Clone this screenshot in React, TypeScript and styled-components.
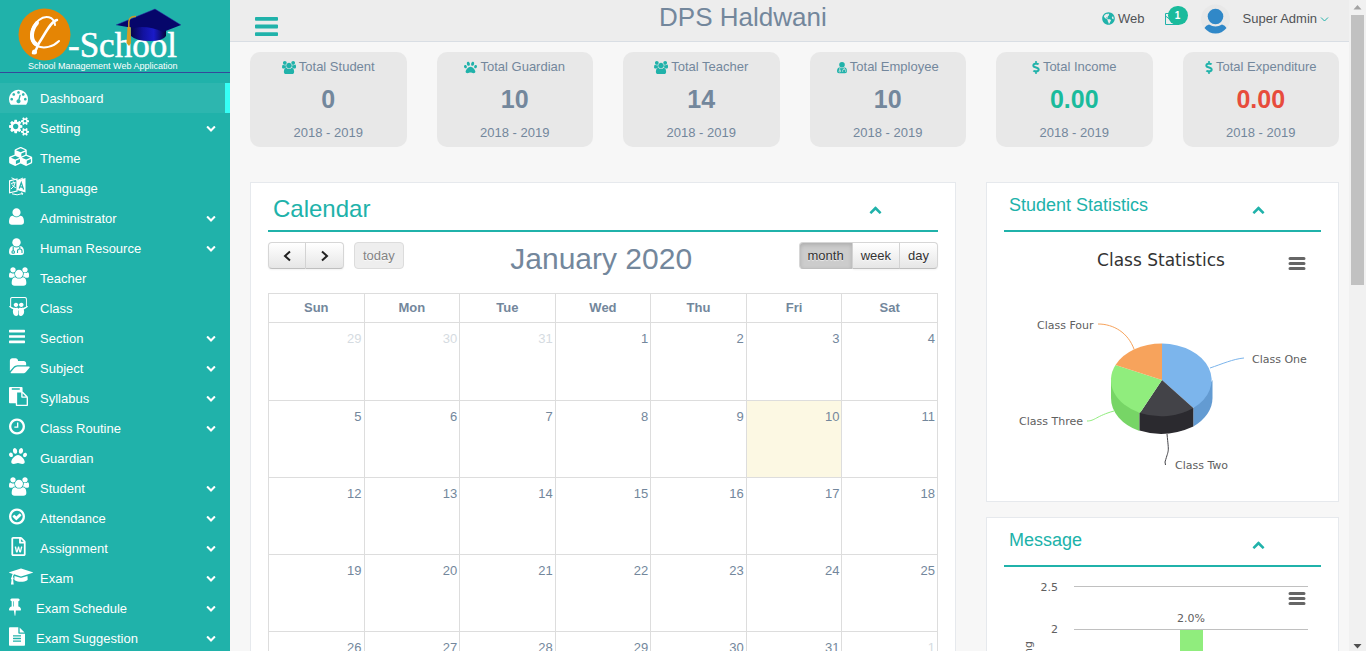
import React from 'react';
import styled, { createGlobalStyle } from 'styled-components';
import { FaPaw, FaSlideshare, FaRegFileWord, FaGlobeAmericas, FaDollarSign } from 'react-icons/fa';

const TEAL = '#20b2aa';
const SLATE = '#73879c';

const GlobalStyle = createGlobalStyle`
  * { box-sizing: border-box; }
  body {
    margin: 0;
    background: #f7f7f7;
    color: ${SLATE};
    font: 13px/18px "Liberation Sans", Arial, sans-serif;
    overflow: hidden;
  }
  button { font: inherit; cursor: pointer; }
  a { color: inherit; text-decoration: none; }
`;

/* ---------- Icons ---------- */

const smallCog =
  'v140q0 16-149 31-12 27-30 52 51 113 51 138 0 4-4 7-122 71-124 71-8 0-46-47t-52-68q-20 2-30 2t-30-2q-14 21-52 68t-46 47q-2 0-124-71-4-3-4-7 0-25 51-138-18-25-30-52-149-15-149-31v-140q0-16 149-31 13-29 30-52-51-113-51-138 0-4 4-7 4-2 35-20t59-34 30-16q8 0 46 46.5t52 67.5q20-2 30-2t30 2q51-71 92-112l6-2q4 0 124 70 4 3 4 7 0 25-51 138 17 23 30 52 149 15 149 31z';
const ring =
  'M1440 896q0-148-73-273t-198-198-273-73-273 73-198 198-73 273 73 273 198 198 273 73 273-73 198-198 73-273zm224 0q0 209-103 385.5t-279.5 279.5-385.5 103-385.5-103-279.5-279.5-103-385.5 103-385.5 279.5-279.5 385.5-103 385.5 103 279.5 279.5 103 385.5z';
const bar = 'v128q0 26-19 45t-45 19h-1408q-26 0-45-19t-19-45v-128q0-26 19-45t45-19h1408q26 0 45 19t19 45z';
const textLine = 'v-64q0-14-9-23t-23-9h-704q-14 0-23 9t-9 23v64q0 14 9 23t23 9h704q14 0 23-9t9-23z';

type Glyph = { x: number; w: number; d: string };

const glyphs: Record<string, Glyph> = {
  dashboard: {
    x: 0,
    w: 1792,
    d: 'M384 1152q0-53-37.5-90.5t-90.5-37.5-90.5 37.5-37.5 90.5 37.5 90.5 90.5 37.5 90.5-37.5 37.5-90.5zm192-448q0-53-37.5-90.5t-90.5-37.5-90.5 37.5-37.5 90.5 37.5 90.5 90.5 37.5 90.5-37.5 37.5-90.5zm428 481l101-382q6-26-7.5-48.5t-38.5-29.5-48 6.5-30 39.5l-101 382q-60 5-107 43.5t-63 98.5q-20 77 20 146t117 89 146-20 89-117q16-60-6-117t-72-91zm660-33q0-53-37.5-90.5t-90.5-37.5-90.5 37.5-37.5 90.5 37.5 90.5 90.5 37.5 90.5-37.5 37.5-90.5zm-640-640q0-53-37.5-90.5t-90.5-37.5-90.5 37.5-37.5 90.5 37.5 90.5 90.5 37.5 90.5-37.5 37.5-90.5zm448 192q0-53-37.5-90.5t-90.5-37.5-90.5 37.5-37.5 90.5 37.5 90.5 90.5 37.5 90.5-37.5 37.5-90.5zm320 448q0 261-141 483-19 29-54 29h-1402q-35 0-54-29-141-221-141-483 0-182 71-348t191-286 286-191 348-71 348 71 286 191 191 286 71 348z',
  },
  cogs: {
    x: 0,
    w: 1920,
    d:
      'M896 896q0-106-75-181t-181-75-181 75-75 181 75 181 181 75 181-75 75-181zm768 512q0-52-38-90t-90-38-90 38-38 90q0 53 37.5 90.5t90.5 37.5 90.5-37.5 37.5-90.5zm0-1024q0-52-38-90t-90-38-90 38-38 90q0 53 37.5 90.5t90.5 37.5 90.5-37.5 37.5-90.5zm-384 421v185q0 10-7 19.5t-16 10.5l-155 24q-11 35-32 76 34 48 90 115 7 10 7 20 0 12-7 19-23 30-82.5 89.5t-78.5 59.5q-11 0-21-7l-115-90q-37 19-77 31-11 108-23 155-7 24-30 24h-186q-11 0-20-7.5t-10-17.5l-23-153q-34-10-75-31l-118 89q-7 7-20 7-11 0-21-8-144-133-144-160 0-9 7-19 10-14 41-53t47-61q-23-44-35-82l-152-24q-10-1-17-9.5t-7-19.5v-185q0-10 7-19.5t16-10.5l155-24q11-35 32-76-34-48-90-115-7-11-7-20 0-12 7-20 22-30 82-89t79-59q11 0 21 7l115 90q34-18 77-32 11-108 23-154 7-24 30-24h186q11 0 20 7.5t10 17.5l23 153q34 10 75 31l118-89q8-7 20-7 11 0 21 8 144 133 144 160 0 9-7 19-12 16-42 54t-45 60q23 48 34 82l152 23q10 2 17 10.5t7 19.5z' +
      'M1920 1338' + smallCog + 'M1920 314' + smallCog,
  },
  cubes: {
    x: 0,
    w: 2240,
    d: 'M640 1632l384-192v-314l-384 164v342zm-64-454l404-173-404-173-404 173zm1088 454l384-192v-314l-384 164v342zm-64-454l404-173-404-173-404 173zm-448-293l384-165v-266l-384 164v267zm-64-379l441-189-441-189-441 189zm1088 518v416q0 36-19 67t-52 47l-448 224q-25 14-57 14t-57-14l-448-224q-4-2-7-4-2 2-7 4l-448 224q-25 14-57 14t-57-14l-448-224q-33-16-52-47t-19-67v-416q0-38 21.5-70t56.5-48l434-186v-400q0-38 21.5-70t56.5-48l448-192q23-10 50-10t50 10l448 192q35 16 56.5 48t21.5 70v400l434 186q36 16 57 48t21 70z',
  },
  user: {
    x: 256,
    w: 1408,
    d: 'M1664 1405q0 120-73 189.5t-194 69.5h-874q-121 0-194-69.5t-73-189.5q0-53 3.5-103.5t14-109 26.5-108.5 43-97.5 62-81 85.5-53.5 111.5-20q9 0 42 21.5t74.5 48 108 48 133.5 21.5 133.5-21.5 108-48 74.5-48 42-21.5q61 0 111.5 20t85.5 53.5 62 81 43 97.5 26.5 108.5 14 109 3.5 103.5zm-320-893q0 159-112.5 271.5t-271.5 112.5-271.5-112.5-112.5-271.5 112.5-271.5 271.5-112.5 271.5 112.5 112.5 271.5z',
  },
  users: {
    x: 0,
    w: 1920,
    d: 'M593 896q-162 5-265 128h-134q-82 0-138-40.5t-56-118.5q0-353 124-353 6 0 43.5 21t97.5 42.5 119 21.5q67 0 133-23-5 37-5 66 0 159 93 283zm1071 637q0 120-73 189.5t-194 69.5h-874q-121 0-194-69.5t-73-189.5q0-53 3.5-103.5t14-109 26.5-108.5 43-97.5 62-81 85.5-53.5 111.5-20q10 0 43 21.5t73 48 107 48 135 21.5 135-21.5 107-48 73-48 43-21.5q61 0 111.5 20t85.5 53.5 62 81 43 97.5 26.5 108.5 14 109 3.5 103.5zm-1024-1277q0 106-75 181t-181 75-181-75-75-181 75-181 181-75 181 75 75 181zm704 384q0 159-112.5 271.5t-271.5 112.5-271.5-112.5-112.5-271.5 112.5-271.5 271.5-112.5 271.5 112.5 112.5 271.5zm576 225q0 78-56 118.5t-138 40.5h-134q-103-123-265-128 93-124 93-283 0-29-5-66 66 23 133 23 59 0 119-21.5t97.5-42.5 43.5-21q124 0 124 353zm-128-609q0 106-75 181t-181 75-181-75-75-181 75-181 181-75 181 75 75 181z',
  },
  bars: { x: 128, w: 1536, d: `M1664 1344${bar}M1664 832${bar}M1664 320${bar}` },
  folder: {
    x: 0,
    w: 1943,
    d: 'M1943 952q0 31-31 66l-336 396q-43 51-120.5 86.5t-143.5 35.5h-1088q-34 0-60.5-13t-26.5-43q0-31 31-66l336-396q43-51 120.5-86.5t143.5-35.5h1088q34 0 60.5 13t26.5 43zm-343-344v160h-832q-94 0-197 47.5t-164 119.5l-337 396-5 6q0-4-.5-12.5t-.5-12.5v-960q0-92 66-158t158-66h320q92 0 158 66t66 158v32h544q92 0 158 66t66 158z',
  },
  paste: {
    x: 0,
    w: 1792,
    d: 'M768 1664h896v-640h-416q-40 0-68-28t-28-68v-416h-384v1152zm256-1440v-64q0-13-9.5-22.5t-22.5-9.5h-704q-13 0-22.5 9.5t-9.5 22.5v64q0 13 9.5 22.5t22.5 9.5h704q13 0 22.5-9.5t9.5-22.5zm256 672h299l-299-299v299zm512 128v672q0 40-28 68t-68 28h-960q-40 0-68-28t-28-68v-160h-544q-40 0-68-28t-28-68v-1344q0-40 28-68t68-28h1088q40 0 68 28t28 68v328q21 13 36 28l408 408q28 28 48 76t20 88z',
  },
  clock: {
    x: 128,
    w: 1536,
    d: 'M1024 544v448q0 14-9 23t-23 9h-320q-14 0-23-9t-9-23v-64q0-14 9-23t23-9h224v-352q0-14 9-23t23-9h64q14 0 23 9t9 23z' + ring,
  },
  check: {
    x: 128,
    w: 1536,
    d: 'M1299 813l-422 422q-19 19-45 19t-45-19l-294-294q-19-19-19-45t19-45l102-102q19-19 45-19t45 19l147 147 275-275q19-19 45-19t45 19l102 102q19 19 19 45t-19 45z' + ring,
  },
  cap: {
    x: 0,
    w: 2304,
    d: 'M1774 836l18 316q4 69-82 128t-235 93.5-323 34.5-323-34.5-235-93.5-82-128l18-316 574 181q22 7 48 7t48-7zm530-324q0 23-22 31l-1120 352q-4 1-10 1t-10-1l-652-206q-43 34-71 111.5t-34 178.5q63 36 63 109 0 69-58 107l58 433q2 14-8 25-9 11-24 11h-192q-15 0-24-11-10-11-8-25l58-433q-58-38-58-107 0-73 65-111 11-207 98-330l-333-104q-22-8-22-31t22-31l1120-352q4-1 10-1t10 1l1120 352q22 8 22 31z',
  },
  pin: {
    x: 320,
    w: 1152,
    d: 'M800 864v-448q0-14-9-23t-23-9-23 9-9 23v448q0 14 9 23t23 9 23-9 9-23zm672 352q0 26-19 45t-45 19h-429l-51 483q-2 12-10.5 20.5t-20.5 8.5h-1q-27 0-32-27l-76-485h-404q-26 0-45-19t-19-45q0-123 78.5-221.5t177.5-98.5v-512q-52 0-90-38t-38-90 38-90 90-38h640q52 0 90 38t38 90-38 90-90 38v512q99 0 177.5 98.5t78.5 221.5z',
  },
  file: {
    x: 128,
    w: 1536,
    d:
      'M1596 476q14 14 28 36h-472v-472q22 14 36 28zm-476 164h544v1056q0 40-28 68t-68 28h-1344q-40 0-68-28t-28-68v-1600q0-40 28-68t68-28h800v544q0 40 28 68t68 28z' +
      `M1280 1376${textLine}M1280 1120${textLine}M1280 864${textLine}`,
  },
  down: {
    x: 0,
    w: 1792,
    d: 'M1683 808l-742 741q-19 19-45 19t-45-19l-742-741q-19-19-19-45.5t19-45.5l166-165q19-19 45-19t45 19l531 531 531-531q19-19 45-19t45 19l166 165q19 19 19 45.5t-19 45.5z',
  },
  up: {
    x: 0,
    w: 1792,
    d: 'M1683 1331l-166 165q-19 19-45 19t-45-19l-531-531-531 531q-19 19-45 19t-45-19l-166-165q-19-19-19-45.5t19-45.5l742-741q19-19 45-19t45 19l742 741q19 19 19 45.5t-19 45.5z',
  },
};

const Svg = styled.svg`
  display: block;
  flex: none;
`;

const Dollar = styled(FaDollarSign)`
  width: 8px;
`;

function Icon({ name, size }: { name: string; size: number }) {
  if (name === 'paw') return <FaPaw size={size === 19 ? 18 : size} aria-hidden />;
  if (name === 'slides') return <FaSlideshare size={size} aria-hidden />;
  if (name === 'word') return <FaRegFileWord size={size} aria-hidden />;
  if (name === 'dollar') return <Dollar size={size} aria-hidden />;
  if (name === 'doctor') {
    return (
      <Svg viewBox="0 0 15 19" height={size} width={Math.round((size * 15) / 19)} aria-hidden>
        <circle cx="7.5" cy="5.4" r="4.2" fill="currentColor" />
        <path d="M4 9Q7.500 12 11 9Q15 9.500 15 15Q15 18 12 18H3Q0 18 0 15Q0 9.500 4 9Z" fill="currentColor" />
        <g fill="none" stroke="var(--icon-cut)" strokeWidth="1.1">
          <path d="M4.200 9.500V14" />
          <circle cx="4.200" cy="15" r="1.300" />
          <path d="M10.800 9.500V12M8.500 16V14Q8.500 12 10.800 12Q13 12 13 14V16" />
        </g>
      </Svg>
    );
  }
  if (name === 'language') {
    return (
      <Svg viewBox="0 0 17 19" height={size} width={17} aria-hidden>
        <path d="M8 3.500L16.500 1V15.500L8 13Z" fill="currentColor" />
        <path d="M2.500 .8L8.500 3.500L14 1V1" fill="none" stroke="currentColor" />
        <path d="M.6 3.800L8 2V14L.6 15.800Z" fill="none" stroke="currentColor" strokeWidth="1.200" />
        <path d="M2 6.500L6.500 5.400M4.300 4.500V6M6 5.800Q5.500 9.500 2 12M3 7.500Q4.500 10 6.800 10.700" fill="none" stroke="currentColor" />
        <path d="M10.200 11.500L12.300 5.500L14.600 12.500M11 9.600L13.800 10.300" fill="none" stroke="var(--icon-cut)" strokeWidth="1.200" />
        <path d="M3 16.800Q8 19 13.500 16.500M12 15.800L13.800 16.300L13 18" fill="none" stroke="currentColor" />
      </Svg>
    );
  }
  const g = glyphs[name];
  return (
    <Svg viewBox={`${g.x} 0 ${g.w} 1792`} height={size} width={Math.round((size * g.w) / 1792)} aria-hidden>
      <path fillRule={name === 'clock' || name === 'check' ? 'evenodd' : 'nonzero'} d={g.d} fill="currentColor" />
    </Svg>
  );
}

/* ---------- Frame ---------- */

const Shell = styled.div`
  display: flex;
  height: 100vh;
  overflow: hidden;
`;

const Sidebar = styled.aside`
  --icon-cut: ${TEAL};
  flex: none;
  width: 230px;
  overflow: hidden;
  background: ${TEAL};
  color: #fff;
`;

const Brand = styled.a`
  display: block;
  height: 73px;
  margin-bottom: 10px;
  border-bottom: 1px solid #34499a;
`;

const Menu = styled.ul`
  margin: 0;
  padding: 0;
  list-style: none;
`;

const MenuLink = styled.a<{ $active?: boolean }>`
  display: flex;
  align-items: center;
  height: 30px;
  padding: 0 ${(p) => (p.$active ? 9 : 14)}px 0 9px;
  background: ${(p) => (p.$active ? 'rgba(255, 255, 255, 0.06)' : 'transparent')};
  border-right: ${(p) => (p.$active ? '5px solid #36fff6' : '0')};
`;

const MenuIcon = styled.span<{ $tight?: boolean }>`
  flex: none;
  display: flex;
  width: ${(p) => (p.$tight ? 27 : 31)}px;
  padding-bottom: 4px;
`;

const MenuText = styled.span`
  flex: 1;
  padding-top: 2px;
`;

const Main = styled.div`
  --icon-cut: #e8e8e8;
  flex: 1;
  min-width: 0;
  overflow: hidden;
`;

const ScrollTrack = styled.div`
  flex: none;
  display: flex;
  flex-direction: column;
  align-items: center;
  width: 17px;
  background: #f1f1f1;
`;

const ScrollThumb = styled.div`
  width: 13px;
  height: 270px;
  margin-bottom: auto;
  background: #c1c1c1;
`;

/* ---------- Top bar ---------- */

const TopBar = styled.header`
  display: grid;
  grid-template-columns: 2fr 7fr 3fr;
  height: 42px;
  background: #ededed;
  border-bottom: 1px solid #d9dee4;
`;

const Toggle = styled.button`
  justify-self: start;
  margin-left: 25px;
  padding: 11px 0 0;
  border: 0;
  background: none;
  color: ${TEAL};
`;

const SchoolName = styled.h1`
  margin: 0;
  text-align: center;
  font-size: 26px;
  line-height: 34px;
  font-weight: 400;
`;

const TopNav = styled.nav`
  display: flex;
  justify-content: flex-end;
  align-items: center;
  height: 37px;
  padding-right: 20px;
  color: #515356;
  white-space: nowrap;
`;

const TopLink = styled.a`
  display: flex;
  align-items: center;
  gap: 3px;
  svg { color: ${TEAL}; }
`;

const Inbox = styled.button`
  position: relative;
  display: flex;
  width: 24px;
  margin: 0 12px 0 20px;
  padding: 0;
  border: 0;
  background: none;
  color: ${TEAL};
`;

const Badge = styled.span`
  position: absolute;
  left: 3px;
  top: -6px;
  width: 20px;
  height: 19px;
  border-radius: 10px;
  background: #1abb9c;
  color: #fff;
  font-size: 10px;
  font-weight: 700;
  line-height: 19px;
  text-align: center;
`;

const Avatar = styled.svg`
  width: 29px;
  height: 30px;
  margin-right: 13px;
`;

/* ---------- Summary cards ---------- */

const Cards = styled.section`
  display: grid;
  grid-template-columns: repeat(6, 1fr);
  gap: 30px;
  padding: 10px 10px 35px 20px;
`;

const Card = styled.article`
  height: 95px;
  padding-top: 6px;
  border-radius: 10px;
  background: #e8e8e8;
  text-align: center;
`;

const CardLabel = styled.div`
  display: flex;
  justify-content: center;
  align-items: center;
  gap: 3px;
  svg { color: ${TEAL}; }
`;

const CardValue = styled.div<{ $color?: string }>`
  padding: 7px 0 9px;
  color: ${(p) => p.$color || SLATE};
  font-size: 25px;
  font-weight: 700;
  line-height: 32px;
`;

/* ---------- Panels ---------- */

const Columns = styled.div`
  display: grid;
  grid-template-columns: 2fr 1fr;
  align-items: start;
  gap: 30px;
  padding: 0 10px 0 20px;
`;

const Stack = styled.div`
  display: grid;
  gap: 15px;
`;

const Panel = styled.section`
  min-width: 0;
  padding: 0 17px 17px;
  border: 1px solid #e6e9ed;
  background: #fff;
`;

const PanelHead = styled.header`
  display: flex;
  justify-content: space-between;
  align-items: flex-start;
  height: 49px;
  padding: 0 56px 0 5px;
  border-bottom: 2px solid ${TEAL};
  color: ${TEAL};
`;

const PanelTitle = styled.h2<{ $large?: boolean }>`
  margin: 0;
  font-size: ${(p) => (p.$large ? 24 : 18)}px;
  line-height: ${(p) => (p.$large ? 52 : 44)}px;
  font-weight: 400;
`;

const Collapse = styled.button`
  padding: 20px 0 0;
  border: 0;
  background: none;
  color: inherit;
`;

/* ---------- Calendar ---------- */

const Toolbar = styled.div`
  display: flex;
  padding: 10px 0 17px;
`;

const Month = styled.h3`
  flex: 1;
  margin: 0;
  text-align: center;
  font-size: 30px;
  font-weight: 400;
  line-height: 34px;
`;

const Group = styled.div`
  display: flex;
  align-items: flex-start;
`;

const CalButton = styled.button<{ $on?: boolean; $wide?: boolean }>`
  height: 27px;
  min-width: ${(p) => (p.$wide ? 38 : 0)}px;
  padding: 0 8px;
  border: 1px solid #d6d6d6;
  border-bottom-color: #bfbfbf;
  border-left-width: 0;
  background: ${(p) => (p.$on ? '#ccc' : 'linear-gradient(#fff, #e6e6e6)')};
  box-shadow: ${(p) =>
    p.$on ? 'inset 0 2px 4px rgba(0, 0, 0, 0.15)' : 'inset 0 1px 0 rgba(255, 255, 255, 0.2), 0 1px 2px rgba(0, 0, 0, 0.05)'};
  color: #333;
  text-shadow: 0 1px 1px rgba(255, 255, 255, 0.75);
  &:first-child { border-left-width: 1px; border-radius: 4px 0 0 4px; }
  &:last-child { border-radius: 0 4px 4px 0; }
  svg { margin: 0 auto; }
`;

const TodayButton = styled(CalButton)`
  margin-left: 10px;
  background: #eee;
  border: 1px solid #dcdcdc;
  box-shadow: none;
  color: #848484;
  && { border-radius: 4px; }
`;

const CalTable = styled.table`
  width: 100%;
  table-layout: fixed;
  border-collapse: collapse;
  th, td { border: 1px solid #ddd; }
  th { height: 29px; padding: 0; }
  tbody tr:first-child td { height: 78px; }
`;

const Day = styled.td<{ $other?: boolean; $today?: boolean }>`
  height: 77px;
  padding: 7px 2px 0;
  vertical-align: top;
  text-align: right;
  color: ${(p) => (p.$other ? '#d5dbe1' : SLATE)};
  background: ${(p) => (p.$today ? '#fcf8e3' : 'transparent')};
`;

/* ---------- Charts ---------- */

const Chart = styled.svg<{ $h: number }>`
  display: block;
  width: 100%;
  height: ${(p) => p.$h}px;
  font-family: "DejaVu Sans", sans-serif;
  font-size: 11px;
  fill: #606060;
`;

const ChartTitle = styled.text`
  font-size: 17px;
  fill: #333;
`;

function ChartMenu({ y }: { y: number }) {
  return <path d={`M286 ${y}h14M286 ${y + 5}h14M286 ${y + 10}h14`} stroke="#666" strokeWidth="3" strokeLinecap="round" />;
}

function PieChart() {
  return (
    <Chart $h={252} viewBox="0 0 317 252" preserveAspectRatio="xMidYMin meet" role="img" aria-label="Class statistics">
      <ChartTitle x="157" y="34" textAnchor="middle">Class Statistics</ChartTitle>
      <ChartMenu y={26.5} />
      <path d="M107 148V166A51 36.500 0 0 0 135.500 199V181Z" fill="#77d566" />
      <path d="M208.500 148V166A51 36.500 0 0 1 189.300 194.500V176Z" fill="#639bd2" />
      <path d="M135.500 180V198.500Q162 207 189.300 194.500V176Z" fill="#2b2a2f" />
      <path d="M158 148V111.500A51 36.500 0 0 1 189.300 176Z" fill="#7cb5ec" />
      <path d="M158 148L189.300 176A51 36.500 0 0 1 136 181Z" fill="#434348" />
      <path d="M158 148L136 181A51 36.500 0 0 1 111.500 133Z" fill="#90ed7d" />
      <path d="M158 148L111.500 133A51 36.500 0 0 1 158 111.500Z" fill="#f7a35c" />
      <g fill="none">
        <path d="M94 92C110 92 124 101 130 117" stroke="#f7a35c" />
        <path d="M206 136C218 132 229 127 240 126" stroke="#7cb5ec" />
        <path d="M83 189C91 189 92 184 110 179" stroke="#90ed7d" />
        <path d="M163 202C165 222 165 216 161 230L161.500 233" stroke="#434348" />
      </g>
      <text x="33" y="97">Class Four</text>
      <text x="248" y="131">Class One</text>
      <text x="15" y="193">Class Three</text>
      <text x="171" y="237">Class Two</text>
    </Chart>
  );
}

function MessageChart() {
  return (
    <Chart $h={252} viewBox="0 0 317 252" preserveAspectRatio="xMidYMin meet" role="img" aria-label="Messages">
      <path d="M70 19.500H304M70 62.500H304M70 104.500H304M70 147.500H304M70 189.500H304" stroke="#c0c0c0" />
      <rect x="176" y="63" width="23" height="126" fill="#90ed7d" />
      <ChartMenu y={26.5} />
      <text x="54" y="24" textAnchor="end">2.5</text>
      <text x="54" y="66" textAnchor="end">2</text>
      <text x="187" y="55" textAnchor="middle">2.0%</text>
      <text transform="translate(28 74) rotate(-90)" textAnchor="end">Sending</text>
    </Chart>
  );
}

function Logo() {
  return (
    <Svg width="230" height="72" viewBox="0 0 230 72" role="img" aria-label="e-School">
      <defs>
        <linearGradient id="capBody" x1="0" x2="1">
          <stop offset="0" stopColor="#06064e" />
          <stop offset="0.35" stopColor="#1212a0" />
          <stop offset="0.65" stopColor="#1a1ac8" />
          <stop offset="1" stopColor="#04043c" />
        </linearGradient>
      </defs>
      <circle cx="44.500" cy="34.500" r="26" fill="#e58504" />
      <g fill="none" stroke="#fff" strokeLinecap="round" strokeLinejoin="round">
        <path d="M55 25C54 16 45 15 39 20C29 28 29 42 37 46C44 49 53 47 59 41" strokeWidth="2" />
        <path d="M37 23C31 30 30 40 36 44" strokeWidth="4" />
        <path d="M57 20C51 21 45 34 39 43C37 47 36 52 33 53" strokeWidth="2.500" />
      </g>
      <circle cx="34.500" cy="52" r="2.500" fill="#fff" />
      <text x="68" y="57" fill="#fff" stroke="#fff" strokeWidth="0.500" fontFamily="Liberation Serif, serif" fontSize="35">-School</text>
      <path d="M131 25H166V36Q163 41 150 41Q136 41 131 36Z" fill="url(#capBody)" />
      <path d="M116 25L155 9L181 25L163 32Q148 25 133 28Z" fill="#06066a" />
      <path d="M116 25L155 9L181 25" fill="none" stroke="#2a2aa8" strokeWidth="0.500" />
      <path d="M136 16.500Q129 16 128.800 22V36" fill="none" stroke="#c79a2a" strokeWidth="1.500" />
      <path d="M127.500 27H130.500L131 43L129 46L126.500 43Z" fill="#d79c22" />
      <text x="28" y="69" fill="#fff" fontFamily="Liberation Sans, sans-serif" fontSize="9">School Management Web Application</text>
    </Svg>
  );
}

/* ---------- Content ---------- */

type Item = { icon: string; label: string; sub?: boolean; active?: boolean; tight?: boolean };

const menu: Item[] = [
  { icon: 'dashboard', label: 'Dashboard', active: true },
  { icon: 'cogs', label: 'Setting', sub: true },
  { icon: 'cubes', label: 'Theme' },
  { icon: 'language', label: 'Language' },
  { icon: 'user', label: 'Administrator', sub: true },
  { icon: 'doctor', label: 'Human Resource', sub: true },
  { icon: 'users', label: 'Teacher' },
  { icon: 'slides', label: 'Class' },
  { icon: 'bars', label: 'Section', sub: true },
  { icon: 'folder', label: 'Subject', sub: true },
  { icon: 'paste', label: 'Syllabus', sub: true },
  { icon: 'clock', label: 'Class Routine', sub: true },
  { icon: 'paw', label: 'Guardian' },
  { icon: 'users', label: 'Student', sub: true },
  { icon: 'check', label: 'Attendance', sub: true },
  { icon: 'word', label: 'Assignment', sub: true },
  { icon: 'cap', label: 'Exam', sub: true },
  { icon: 'pin', label: 'Exam Schedule', sub: true, tight: true },
  { icon: 'file', label: 'Exam Suggestion', sub: true, tight: true },
];

const cards = [
  { icon: 'users', label: 'Total Student', value: '0' },
  { icon: 'paw', label: 'Total Guardian', value: '10' },
  { icon: 'users', label: 'Total Teacher', value: '14' },
  { icon: 'doctor', label: 'Total Employee', value: '10' },
  { icon: 'dollar', label: 'Total Income', value: '0.00', color: '#1abb9c' },
  { icon: 'dollar', label: 'Total Expenditure', value: '0.00', color: '#e74c3c' },
];

const weekdays = ['Sun', 'Mon', 'Tue', 'Wed', 'Thu', 'Fri', 'Sat'];
const firstSunday = new Date(2019, 11, 29);
const weeks = Array.from({ length: 5 }, (_, w) =>
  weekdays.map((_, d) => new Date(firstSunday.getFullYear(), firstSunday.getMonth(), firstSunday.getDate() + w * 7 + d)),
);

function Arrow({ left }: { left?: boolean }) {
  return (
    <Svg width="10" height="12" viewBox="0 0 10 12" aria-hidden>
      <path d={left ? 'M8 1.500L3 6L8 10.500' : 'M2 1.500L7 6L2 10.500'} fill="none" stroke="#222" strokeWidth="2" />
    </Svg>
  );
}

function Head({ title, large }: { title: string; large?: boolean }) {
  return (
    <PanelHead>
      <PanelTitle $large={large}>{title}</PanelTitle>
      <Collapse aria-label={`Collapse ${title}`}>
        <Icon name="up" size={13} />
      </Collapse>
    </PanelHead>
  );
}

export default function App() {
  return (
    <Shell>
      <GlobalStyle />
      <Sidebar>
        <Brand href="#">
          <Logo />
        </Brand>
        <Menu>
          {menu.map((m) => (
            <li key={m.label}>
              <MenuLink href="#" $active={m.active}>
                <MenuIcon $tight={m.tight}>
                  <Icon name={m.icon} size={19} />
                </MenuIcon>
                <MenuText>{m.label}</MenuText>
                {m.sub && <Icon name="down" size={10} />}
              </MenuLink>
            </li>
          ))}
        </Menu>
      </Sidebar>

      <Main>
        <TopBar>
          <Toggle aria-label="Toggle menu">
            <Icon name="bars" size={27} />
          </Toggle>
          <SchoolName>DPS Haldwani</SchoolName>
          <TopNav>
            <TopLink href="#">
              <FaGlobeAmericas size={13} aria-hidden />
              Web
            </TopLink>
            <Inbox aria-label="Messages">
              <Svg width="14" height="13" viewBox="0 0 14 13" aria-hidden>
                <path d="M.5 1.500H13.500V12.500H.5ZM.5 4L7 9L13.500 4" fill="none" stroke="currentColor" />
              </Svg>
              <Badge>1</Badge>
            </Inbox>
            <Avatar viewBox="0 0 29 30" aria-hidden>
              <circle cx="14.500" cy="15" r="14.500" fill="#e8e8e8" />
              <circle cx="14.500" cy="12.500" r="7.800" fill="#3088c8" />
              <path d="M3.500 24Q5 21 8 20.500Q14.500 24.500 21 20.500Q24 21 25.500 24Q21 29.500 14.500 29.500Q8 29.500 3.500 24Z" fill="#3088c8" />
            </Avatar>
            <TopLink href="#">
              Super Admin
              <Svg width="9" height="8" viewBox="0 0 9 8" aria-hidden>
                <path d="M1 2.500L4.500 6L8 2.500" fill="none" stroke="currentColor" />
              </Svg>
            </TopLink>
          </TopNav>
        </TopBar>

        <Cards>
          {cards.map((c) => (
            <Card key={c.label}>
              <CardLabel>
                <Icon name={c.icon} size={13} />
                {c.label}
              </CardLabel>
              <CardValue $color={c.color}>{c.value}</CardValue>
              <div>2018 - 2019</div>
            </Card>
          ))}
        </Cards>

        <Columns>
          <Panel>
            <Head title="Calendar" large />
            <Toolbar>
              <Group>
                <Group>
                  <CalButton $wide aria-label="Previous month"><Arrow left /></CalButton>
                  <CalButton $wide aria-label="Next month"><Arrow /></CalButton>
                </Group>
                <TodayButton disabled>today</TodayButton>
              </Group>
              <Month>January 2020</Month>
              <Group>
                <CalButton $on>month</CalButton>
                <CalButton>week</CalButton>
                <CalButton>day</CalButton>
              </Group>
            </Toolbar>
            <CalTable>
              <thead>
                <tr>{weekdays.map((d) => <th key={d} scope="col">{d}</th>)}</tr>
              </thead>
              <tbody>
                {weeks.map((week, i) => (
                  <tr key={i}>
                    {week.map((d) => (
                      <Day
                        key={d.getTime()}
                        $other={d.getMonth() !== 0}
                        $today={d.getMonth() === 0 && d.getDate() === 10}
                      >
                        {d.getDate()}
                      </Day>
                    ))}
                  </tr>
                ))}
              </tbody>
            </CalTable>
          </Panel>

          <Stack>
            <Panel>
              <Head title="Student Statistics" />
              <PieChart />
            </Panel>
            <Panel>
              <Head title="Message" />
              <MessageChart />
            </Panel>
          </Stack>
        </Columns>
      </Main>

      <ScrollTrack aria-hidden>
        <Svg width="17" height="15" viewBox="0 0 17 15">
          <path d="M4.500 9.500L8.500 5L12.500 9.500Z" fill="#a3a3a3" />
        </Svg>
        <ScrollThumb />
        <Svg width="17" height="11" viewBox="0 0 17 11">
          <path d="M4.500 4L8.500 8.500L12.500 4Z" fill="#505050" />
        </Svg>
      </ScrollTrack>
    </Shell>
  );
}
